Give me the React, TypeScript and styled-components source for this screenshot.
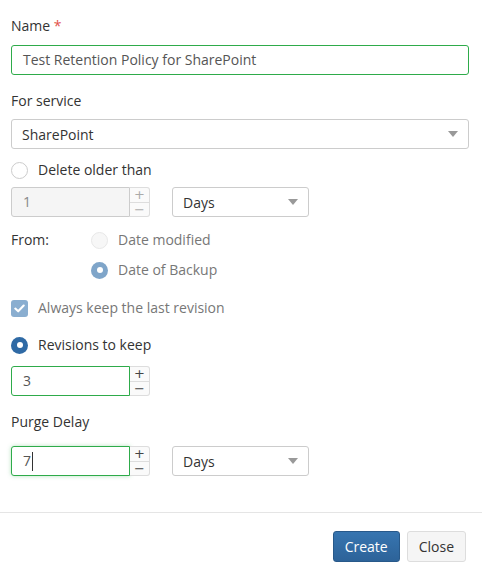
import React from "react";
import styled, { createGlobalStyle, css } from "styled-components";

const Global = createGlobalStyle`
  html, body { margin: 0; padding: 0; background: #fff; }
  body { font-family: "Open Sans", "Noto Sans", Arial, sans-serif; font-size: 14px; color: #333; }
  * { box-sizing: border-box; }
`;

const Dialog = styled.div`
  width: 482px;
  height: 572px;
  display: flex;
  flex-direction: column;
  background: #fff;
`;

const Body = styled.div`
  padding: 16px 13px 0 11px;
  display: flex;
  flex-direction: column;
`;

const Label = styled.div<{ $mt?: number; $mb?: number }>`
  line-height: 20px;
  margin-top: ${(p) => p.$mt ?? 0}px;
  margin-bottom: ${(p) => p.$mb ?? 0}px;
  color: #333;
`;

const Req = styled.span`
  color: #e2524c;
`;

const TextInput = styled.div<{ $valid?: boolean; $focus?: boolean; $disabled?: boolean; $w?: number }>`
  height: 30px;
  width: ${(p) => (p.$w ? `${p.$w}px` : "100%")};
  border: 1px solid ${(p) => (p.$valid ? "#2eab4a" : "#ccc")};
  border-radius: 3px;
  background: ${(p) => (p.$disabled ? "#f5f5f5" : "#fff")};
  color: ${(p) => (p.$disabled ? "#888" : "#555")};
  padding: 0 11px;
  display: flex;
  align-items: center;
  line-height: 20px;
  ${(p) =>
    p.$focus &&
    css`
      box-shadow: 0 0 4px rgba(46, 171, 74, 0.35);
    `}
`;

const Caret = styled.span`
  display: inline-block;
  width: 1px;
  height: 19px;
  background: #333;
  margin-left: 1px;
`;

const SelectBox = styled.div<{ $w?: number }>`
  height: 30px;
  width: ${(p) => (p.$w ? `${p.$w}px` : "100%")};
  border: 1px solid #ccc;
  border-radius: 3px;
  background: #fff;
  color: #333;
  padding: 0 10px;
  display: flex;
  align-items: center;
  justify-content: space-between;
  &::after {
    content: "";
    width: 0;
    height: 0;
    border-left: 5.5px solid transparent;
    border-right: 5.5px solid transparent;
    border-top: 6px solid #999;
    margin-right: 0px;
  }
`;

const Row = styled.div<{ $mt?: number; $gap?: number }>`
  display: flex;
  align-items: center;
  margin-top: ${(p) => p.$mt ?? 0}px;
  gap: ${(p) => p.$gap ?? 0}px;
`;

const Spin = styled.div`
  display: flex;
  width: 139px;
`;

const SpinField = styled(TextInput)`
  flex: 1;
  border-radius: 3px 0 0 3px;
`;

const SpinBtns = styled.div<{ $disabled?: boolean }>`
  width: 20px;
  height: 30px;
  display: flex;
  flex-direction: column;
  border: 1px solid #ddd;
  border-left: none;
  border-radius: 0 3px 3px 0;
  background: #fafafa;
  color: ${(p) => (p.$disabled ? "#aaa" : "#444")};
`;

const SpinBtn = styled.div<{ $top?: boolean }>`
  flex: 1;
  display: flex;
  align-items: center;
  justify-content: center;
  font-size: 13px;
  line-height: 1;
  font-family: "DejaVu Sans", sans-serif;
  ${(p) => p.$top && css`border-bottom: 1px solid #ddd;`}
`;

const Radio = styled.span<{ $checked?: boolean; $disabled?: boolean }>`
  width: 17px;
  height: 17px;
  border-radius: 50%;
  flex: none;
  display: inline-flex;
  align-items: center;
  justify-content: center;
  ${(p) =>
    p.$checked
      ? css`
          background: ${p.$disabled ? "#7fa5c9" : "#2f6aa5"};
          &::after {
            content: "";
            width: 6px;
            height: 6px;
            border-radius: 50%;
            background: #fff;
          }
        `
      : css`
          border: 1px solid ${p.$disabled ? "#e8e8e8" : "#ccc"};
          background: ${p.$disabled ? "#f7f7f7" : "#fff"};
        `}
`;

const Check = styled.span<{ $disabled?: boolean }>`
  width: 17px;
  height: 17px;
  border-radius: 3px;
  flex: none;
  background: ${(p) => (p.$disabled ? "#8aaed0" : "#2f6aa5")};
  display: inline-flex;
  align-items: center;
  justify-content: center;
`;

const OptText = styled.span<{ $muted?: boolean }>`
  color: ${(p) => (p.$muted ? "#777" : "#333")};
  line-height: 20px;
  margin-left: 10px;
`;

const FromLabel = styled.span`
  width: 80px;
  line-height: 20px;
`;

const FromGroup = styled.div`
  display: flex;
  flex-direction: column;
  gap: 10px;
`;

const Divider = styled.div`
  height: 1px;
  background: #e5e5e5;
  margin-top: 36px;
`;

const Footer = styled.div`
  display: flex;
  justify-content: flex-end;
  gap: 7px;
  padding: 18px 16px 0 0;
`;

const Button = styled.button<{ $primary?: boolean }>`
  font-family: inherit;
  font-size: 14px;
  height: 31px;
  padding: 0 11px;
  border-radius: 3px;
  cursor: pointer;
  ${(p) =>
    p.$primary
      ? css`
          background: linear-gradient(#3775b0, #2d6399);
          border: 1px solid #28598a;
          color: #fff;
        `
      : css`
          background: #f5f5f5;
          border: 1px solid #ddd;
          color: #333;
        `}
`;

const Spinner: React.FC<{ value: React.ReactNode; disabled?: boolean; valid?: boolean; focus?: boolean }> = ({
  value,
  disabled,
  valid,
  focus,
}) => (
  <Spin>
    <SpinField $disabled={disabled} $valid={valid} $focus={focus}>
      {value}
    </SpinField>
    <SpinBtns $disabled={disabled}>
      <SpinBtn $top>+</SpinBtn>
      <SpinBtn>−</SpinBtn>
    </SpinBtns>
  </Spin>
);

export default function App() {
  return (
    <Dialog>
      <Global />
      <Body>
        <Label $mb={9}>
          Name <Req>*</Req>
        </Label>
        <TextInput $valid>Test Retention Policy for SharePoint</TextInput>

        <Label $mt={16} $mb={8}>For service</Label>
        <SelectBox>SharePoint</SelectBox>

        <Row $mt={11}>
          <Radio />
          <OptText>Delete older than</OptText>
        </Row>

        <Row $mt={7} $gap={22}>
          <Spinner value="1" disabled />
          <SelectBox $w={137}>Days</SelectBox>
        </Row>

        <Row $mt={13} style={{ alignItems: "flex-start" }}>
          <FromLabel>From:</FromLabel>
          <FromGroup>
            <Row>
              <Radio $disabled />
              <OptText $muted>Date modified</OptText>
            </Row>
            <Row>
              <Radio $checked $disabled />
              <OptText $muted>Date of Backup</OptText>
            </Row>
          </FromGroup>
        </Row>

        <Row $mt={18}>
          <Check $disabled>
            <svg width="11" height="9" viewBox="0 0 11 9">
              <path d="M1.3 4.6 L4.2 7.3 L9.7 1.6" fill="none" stroke="#fff" strokeWidth="2.1" strokeLinecap="round" strokeLinejoin="round" />
            </svg>
          </Check>
          <OptText $muted>Always keep the last revision</OptText>
        </Row>

        <Row $mt={17}>
          <Radio $checked />
          <OptText>Revisions to keep</OptText>
        </Row>

        <Row $mt={11}>
          <Spinner value="3" valid />
        </Row>

        <Label $mt={16} $mb={14}>Purge Delay</Label>

        <Row $gap={22}>
          <Spinner
            value={
              <>
                7<Caret />
              </>
            }
            valid
            focus
          />
          <SelectBox $w={137}>Days</SelectBox>
        </Row>
      </Body>
      <Divider />
      <Footer>
        <Button $primary>Create</Button>
        <Button>Close</Button>
      </Footer>
    </Dialog>
  );
}
